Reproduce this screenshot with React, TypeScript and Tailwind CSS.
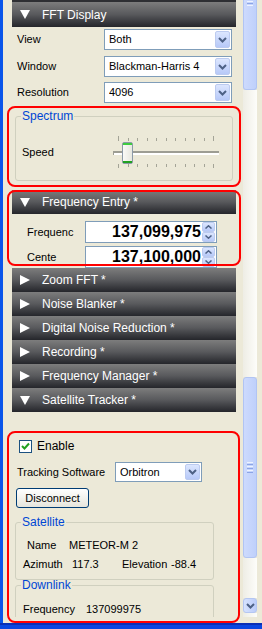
import React from "react";

export default function App() {
    return (
        <div className="relative flex h-[629px] w-[262px] flex-col overflow-hidden bg-[#ece9d8] font-['Liberation_Sans',Arial,sans-serif] text-[11px] text-black">
            <div className="flex h-[623px]">
                <div className="w-[3px] bg-[#0a55ea]" />
                <div className="h-[617px] w-[240px] overflow-hidden pl-[9px] pr-[7px]">
                    <FftDisplay />
                    <FrequencyEntry />
                    <PanelHeader title="Zoom FFT *" />
                    <PanelHeader title="Noise Blanker *" />
                    <PanelHeader title="Digital Noise Reduction *" />
                    <PanelHeader title="Recording *" />
                    <PanelHeader title="Frequency Manager *" />
                    <PanelHeader title="Satellite Tracker *" open />
                    <SatelliteTracker />
                </div>
                <ScrollBar />
                <div className="w-[5px]" />
            </div>
            <div className="h-[6px] border-t-2 border-[#0b2fb5] bg-[#0a46e0]" />

            {/* red highlight marks */}
            <div className="absolute left-[7px] top-[106px] h-[81px] w-[234px] rounded-[8px] border-2 border-[#ff0000]" />
            <div className="absolute left-[7px] top-[190px] h-[76px] w-[234px] rounded-[8px] border-2 border-[#ff0000]" />
            <div className="absolute left-[7px] top-[431px] h-[192px] w-[233px] rounded-[8px] border-2 border-[#ff0000]" />
        </div>
    )
}

function FftDisplay() {
    return (
        <div>
            <PanelHeader title="FFT Display" open tall />
            <div className="mt-[2px] flex h-[21px] items-center">
                <span className="w-[92px] pl-[5px]">View</span>
                <Select value="Both" className="w-[128px]" />
            </div>
            <div className="mt-[6px] flex h-[21px] items-center">
                <span className="w-[92px] pl-[5px]">Window</span>
                <Select value="Blackman-Harris 4" className="w-[128px]" />
            </div>
            <div className="mt-[5px] flex h-[21px] items-center">
                <span className="w-[92px] pl-[5px]">Resolution</span>
                <Select value="4096" className="w-[128px]" />
            </div>
            <GroupBox title="Spectrum" className="mx-[3px] mt-[7px]">
                <div className="flex items-center pb-[10px] pt-[12px]">
                    <span className="w-[97px] pl-[6px]">Speed</span>
                    <Slider />
                </div>
            </GroupBox>
        </div>
    )
}

function FrequencyEntry() {
    return (
        <div className="mt-[9px]">
            <PanelHeader title="Frequency Entry *" open />
            <div className="mt-[7px] flex items-center">
                <span className="w-[73px] pl-[15px]">Frequenc</span>
                <NumberBox value="137,099,975" />
            </div>
            <div className="mt-[3px] flex items-center">
                <span className="w-[73px] pl-[15px]">Cente</span>
                <NumberBox value="137,100,000" />
            </div>
        </div>
    )
}

function SatelliteTracker() {
    return (
        <div>
            <div className="mt-[25px] flex items-center pl-[7px]">
                <div className="flex h-[13px] w-[13px] items-center justify-center border border-[#1c5180] bg-white">
                    <svg width="9" height="9" viewBox="0 0 9 9">
                        <path d="M1 4 L3.5 6.5 L8 1.5" fill="none" stroke="#21a121" strokeWidth="2" />
                    </svg>
                </div>
                <span className="ml-[5px] text-[12px]">Enable</span>
            </div>
            <div className="mt-[7px] flex h-[20px] items-center">
                <span className="w-[103px] pl-[5px]">Tracking Software</span>
                <Select value="Orbitron" className="w-[87px]" />
            </div>
            <div className="mt-[6px] pl-[4px]">
                <button className="h-[20px] w-[73px] rounded-[3px] border border-[#003c74] bg-linear-to-b from-white to-[#e6e5dc] text-[11px]">
                    Disconnect
                </button>
            </div>
            <GroupBox title="Satellite" className="mx-[3px] mt-[8px] w-[199px]">
                <div className="pb-[8px] pt-[10px]">
                    <div className="flex h-[13px] items-center pl-[11px]">
                        <span className="w-[42px]">Name</span>
                        <span>METEOR-M 2</span>
                    </div>
                    <div className="mt-[6px] flex h-[13px] items-center pl-[7px]">
                        <span className="w-[49px]">Azimuth</span>
                        <span className="w-[50px]">117.3</span>
                        <span className="w-[49px]">Elevation</span>
                        <span>-88.4</span>
                    </div>
                </div>
            </GroupBox>
            <GroupBox title="Downlink" className="mx-[3px] mt-[-1px] w-[199px]">
                <div className="flex h-[40px] items-start pl-[7px] pt-[9px]">
                    <span className="w-[63px]">Frequency</span>
                    <span>137099975</span>
                </div>
            </GroupBox>
        </div>
    )
}

interface PanelHeaderProps {
    title: string;
    open?: boolean;
    tall?: boolean;
}

function PanelHeader({ title, open, tall }: PanelHeaderProps) {
    return (
        <div className={`flex items-center bg-linear-to-b from-[#7d7d7d] via-[#58595c] to-[#25262b] text-[12px] text-white ${tall ? "h-[27px] border-t-2 border-[#2e2f33]" : "h-[24px]"}`}>
            <span className="ml-[8px] flex w-[22px] items-center">
                {open ? (
                    <svg width="10" height="9" viewBox="0 0 10 9">
                        <polygon points="0,0 10,0 5,9" fill="white" />
                    </svg>
                ) : (
                    <svg width="10" height="10" viewBox="0 0 10 10">
                        <polygon points="0,0 10,5 0,10" fill="white" />
                    </svg>
                )}
            </span>
            <span>{title}</span>
        </div>
    )
}

interface SelectProps {
    value: string;
    className?: string;
}

function Select({ value, className }: SelectProps) {
    return (
        <div className={`flex h-full items-center border border-[#7f9db9] bg-white pl-[4px] pr-[1px] ${className}`}>
            <span className="flex-1 truncate text-[11px]">{value}</span>
            <div className="flex h-[calc(100%-2px)] w-[15px] items-center justify-center rounded-[2px] border border-[#bccbf0] bg-linear-to-b from-[#dce6fe] to-[#b7c9f8]">
                <svg width="9" height="6" viewBox="0 0 9 6">
                    <polyline points="1,1 4.5,4.5 8,1" fill="none" stroke="#4d6185" strokeWidth="2" />
                </svg>
            </div>
        </div>
    )
}

function NumberBox({ value }: { value: string }) {
    return (
        <div className="flex h-[22px] w-[132px] items-center border border-[#7f9db9] bg-white">
            <span className="flex-1 pr-[1px] text-right text-[16px] font-bold leading-none">{value}</span>
            <div className="mr-[1px] flex h-[20px] w-[13px] flex-col">
                <SpinButton up />
                <SpinButton />
            </div>
        </div>
    )
}

function SpinButton({ up }: { up?: boolean }) {
    return (
        <div className="flex h-[10px] items-center justify-center rounded-[2px] border border-[#bccbf0] bg-linear-to-b from-[#dce6fe] to-[#b7c9f8]">
            <svg width="7" height="4" viewBox="0 0 7 4">
                <polyline points={up ? "0.5,3.5 3.5,0.8 6.5,3.5" : "0.5,0.5 3.5,3.2 6.5,0.5"} fill="none" stroke="#4d6185" strokeWidth="1.5" />
            </svg>
        </div>
    )
}

interface GroupBoxProps {
    title: string;
    className?: string;
    children: React.ReactNode;
}

function GroupBox({ title, className, children }: GroupBoxProps) {
    return (
        <fieldset className={`rounded-[3px] border border-[#d0d0bf] ${className}`}>
            <legend className="ml-[5px] px-[1px] text-[12px] leading-[13px] text-[#0046d5]">{title}</legend>
            {children}
        </fieldset>
    )
}

function Slider() {
    const ticks = Array.from({ length: 11 }, (_, i) => i);
    return (
        <div className="w-[106px]">
            <div className="flex h-[6px] items-end justify-between px-[5px]">
                {ticks.map((i) => (
                    <div key={i} className={`w-px bg-[#a4a497] ${i === 0 || i === 10 ? "h-[5px]" : "h-[3px]"}`} />
                ))}
            </div>
            <div className="relative flex h-[23px] items-center">
                <div className="h-[4px] w-full border-l border-t-2 border-[#9d9d93] bg-white" />
                <div className="absolute left-[9px] top-[1px] flex h-[22px] w-[11px] flex-col justify-between rounded-[2px] border border-[#8c9aa8] bg-linear-to-r from-[#fafaf7] to-[#e8e8e0]">
                    <div className="h-[2px] bg-[#3fcb3f]" />
                    <div className="h-[2px] bg-[#21a121]" />
                </div>
            </div>
            <div className="flex h-[6px] items-start justify-between px-[5px]">
                {ticks.map((i) => (
                    <div key={i} className={`w-px bg-[#a4a497] ${i === 0 || i === 10 ? "h-[4px]" : "h-[3px]"}`} />
                ))}
            </div>
        </div>
    )
}

function ScrollBar() {
    return (
        <div className="flex h-[617px] w-[14px] flex-col">
            <Thumb className="h-[90px] rounded-b-[3px] border-t-0">
                <div className="mt-[1px] flex flex-col items-center gap-[1px]">
                    <div className="h-px w-[6px] bg-[#eef3ff]" />
                    <div className="h-px w-[6px] bg-[#8ca5e6]" />
                    <div className="h-px w-[6px] bg-[#eef3ff]" />
                </div>
            </Thumb>
            <div className="h-[287px] bg-linear-to-r from-[#eeede5] to-[#fdfdfa]" />
            <Thumb className="h-[181px] rounded-[3px]">
                <div className="flex h-full flex-col items-center justify-center gap-[1px]">
                    <div className="h-px w-[6px] bg-[#eef3ff]" />
                    <div className="h-px w-[6px] bg-[#8ca5e6]" />
                    <div className="h-px w-[6px] bg-[#eef3ff]" />
                    <div className="h-px w-[6px] bg-[#8ca5e6]" />
                    <div className="h-px w-[6px] bg-[#eef3ff]" />
                    <div className="h-px w-[6px] bg-[#8ca5e6]" />
                </div>
            </Thumb>
            <div className="h-[40px] bg-linear-to-r from-[#eeede5] to-[#fdfdfa]" />
            <div className="flex h-[15px] items-center justify-center rounded-[3px] border border-[#b4c6f2] bg-linear-to-r from-[#d6e2fe] to-[#bccdfa]">
                <svg width="9" height="6" viewBox="0 0 9 6">
                    <polyline points="1,1 4.5,4.5 8,1" fill="none" stroke="#4d6185" strokeWidth="2" />
                </svg>
            </div>
            <div className="flex-1 bg-linear-to-r from-[#eeede5] to-[#fdfdfa]" />
        </div>
    )
}

function Thumb({ className, children }: { className?: string; children?: React.ReactNode }) {
    return (
        <div className={`flex flex-col border border-[#b1c4f3] bg-linear-to-r from-[#cddafd] to-[#bfd0fb] ${className}`}>
            {children}
        </div>
    )
}
